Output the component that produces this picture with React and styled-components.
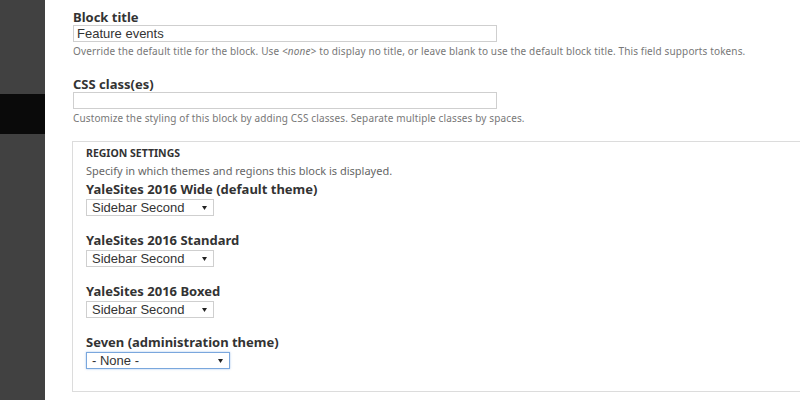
import React from 'react'
import styled, { createGlobalStyle } from 'styled-components'

const GlobalStyle = createGlobalStyle`
  html, body {
    margin: 0;
    padding: 0;
    background: #fff;
    overflow: hidden;
  }
  body {
    font-family: "Noto Sans", "DejaVu Sans", sans-serif;
    color: #333;
  }
`

const Page = styled.div`
  display: flex;
  width: 800px;
  height: 400px;
  overflow: hidden;
`

const Sidebar = styled.div`
  width: 45px;
  flex-shrink: 0;
  background: #414141;
  padding-top: 94px;
`

const ActiveItem = styled.div`
  height: 40px;
  background: #0a0a0a;
`

const Main = styled.div`
  flex: 1;
  padding: 9px 0 0 28px;
`

const Field = styled.div`
  margin-bottom: ${p => p.$gap || 0}px;
`

const Label = styled.label`
  display: block;
  font-size: 13px;
  font-weight: 700;
  line-height: 16px;
  color: #333;
`

const TextInput = styled.input`
  display: block;
  box-sizing: border-box;
  width: 424px;
  height: 17px;
  margin: 0;
  padding: 0 3px;
  border: 1px solid #cfcfcf;
  font-family: "Liberation Sans", Arial, sans-serif;
  font-size: 13px;
  color: #333;
  outline: none;
`

const Description = styled.div`
  margin-top: 3px;
  font-size: 10px;
  line-height: 13px;
  letter-spacing: 0.13px;
  color: #777;

  em {
    font-style: italic;
  }
`

const Fieldset = styled.fieldset`
  box-sizing: border-box;
  width: 760px;
  height: 251px;
  margin: 0 0 0 -1px;
  padding: 5px 13px 0;
  border: 1px solid #dcdcdc;
  border-right: none;
`

const Legend = styled.div`
  font-size: 10.5px;
  font-weight: 700;
  line-height: 12px;
  color: #333;
  text-transform: uppercase;
`

const Intro = styled.div`
  margin-top: 5px;
  font-size: 11px;
  line-height: 14px;
  color: #666;
`

const ThemeRow = styled.div`
  margin-top: ${p => p.$first ? 4 : 17}px;
`

const ThemeLabel = styled.div`
  font-size: 13px;
  font-weight: 700;
  line-height: 15px;
  color: #333;
  margin-bottom: 2px;
`

const Select = styled.div`
  box-sizing: border-box;
  display: flex;
  align-items: center;
  justify-content: space-between;
  width: ${p => p.$width}px;
  height: 17px;
  padding: 0 6px 0 5px;
  border: 1px solid ${p => p.$focused ? '#7aa7dd' : '#cfcfcf'};
  box-shadow: ${p => p.$focused ? '0 0 2px rgba(80, 140, 220, 0.5)' : 'none'};
  font-family: "Liberation Sans", Arial, sans-serif;
  font-size: 13px;
  color: #333;
  background: #fff;
`

const Arrow = styled.svg`
  width: 5px;
  height: 4px;
  fill: #222;
`

const themes = [
  { name: 'YaleSites 2016 Wide (default theme)', value: 'Sidebar Second' },
  { name: 'YaleSites 2016 Standard', value: 'Sidebar Second' },
  { name: 'YaleSites 2016 Boxed', value: 'Sidebar Second' },
  { name: 'Seven (administration theme)', value: '- None -', focused: true },
]

const App = () => {
  return (
    <>
      <GlobalStyle />
      <Page>
        <Sidebar>
          <ActiveItem />
        </Sidebar>
        <Main>
          <Field $gap={18}>
            <Label>Block title</Label>
            <TextInput defaultValue="Feature events" />
            <Description>
              Override the default title for the block. Use <em>&lt;none&gt;</em> to display no title, or leave blank to use the default block title. This field supports tokens.
            </Description>
          </Field>
          <Field $gap={16}>
            <Label>CSS class(es)</Label>
            <TextInput />
            <Description>
              Customize the styling of this block by adding CSS classes. Separate multiple classes by spaces.
            </Description>
          </Field>
          <Fieldset>
            <Legend>Region settings</Legend>
            <Intro>Specify in which themes and regions this block is displayed.</Intro>
            {themes.map((t, i) => (
              <ThemeRow key={t.name} $first={i === 0}>
                <ThemeLabel>{t.name}</ThemeLabel>
                <Select $width={t.focused ? 144 : 128} $focused={t.focused}>
                  <span>{t.value}</span>
                  <Arrow viewBox="0 0 5 4">
                    <path d="M0 0h5L2.5 4z" />
                  </Arrow>
                </Select>
              </ThemeRow>
            ))}
          </Fieldset>
        </Main>
      </Page>
    </>
  )
}

export default App
